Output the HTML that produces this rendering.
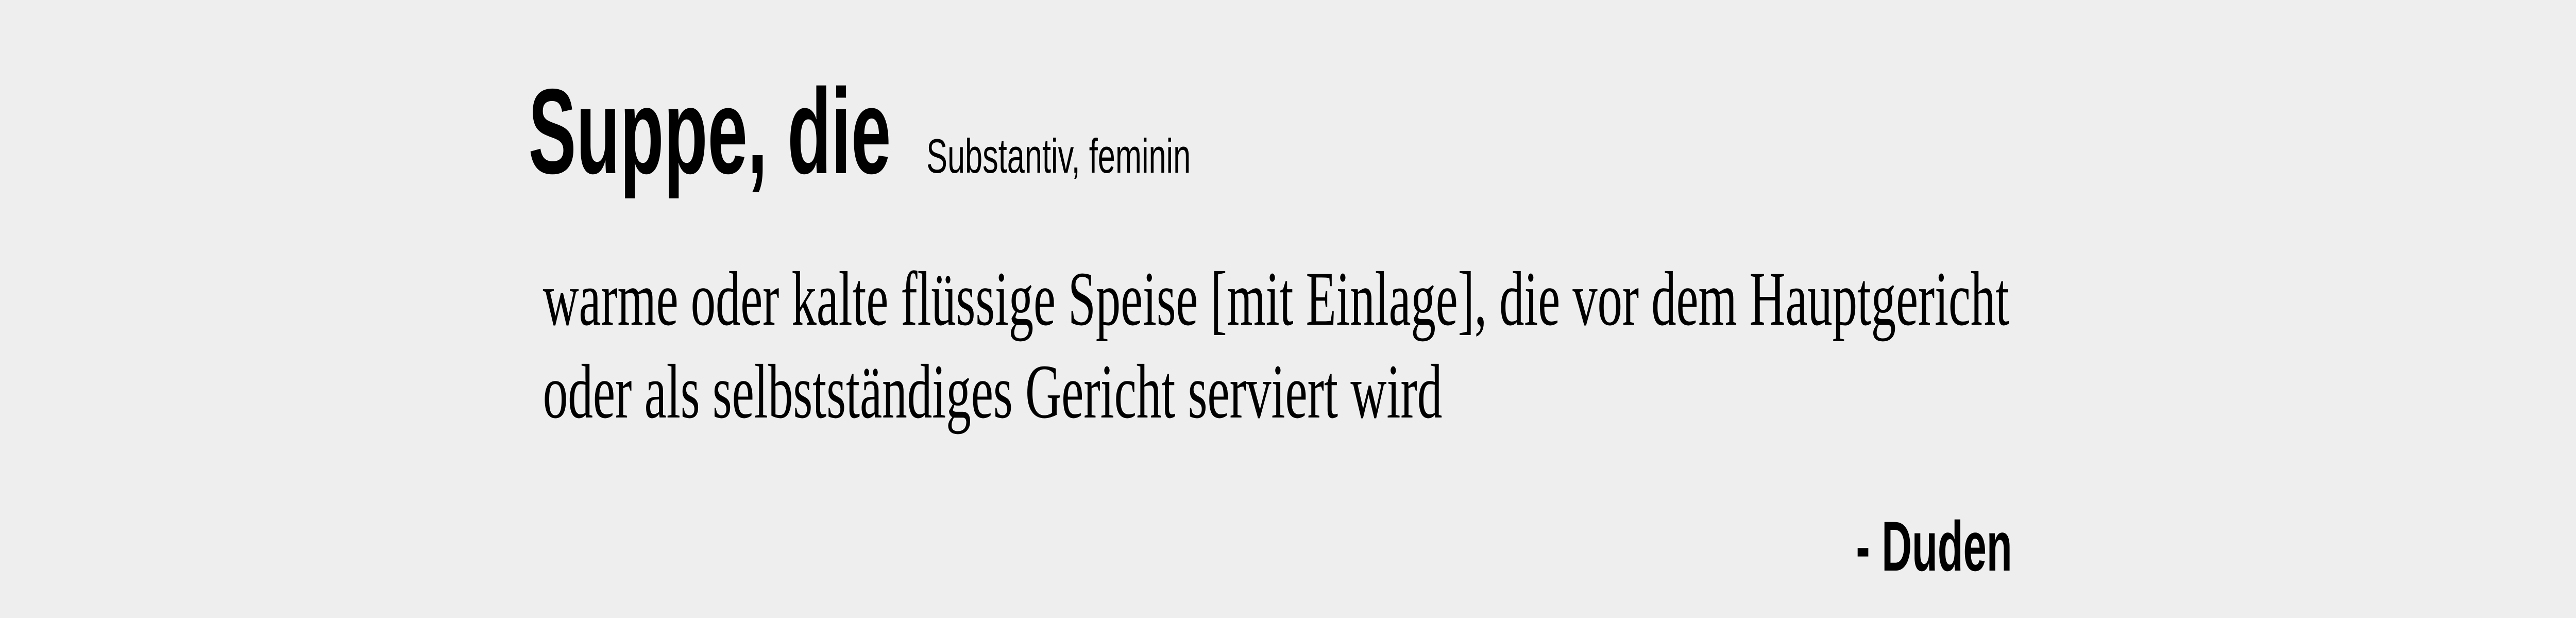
<!DOCTYPE html>
<html><head><meta charset="utf-8"><style>
html,body{margin:0;padding:0;background:#eeeeee;width:100%;height:100%;overflow:hidden;}
svg{display:block;width:100vw;height:100vh;}
</style></head><body>
<svg viewBox="0 0 8000 1199" preserveAspectRatio="none" xmlns="http://www.w3.org/2000/svg">
<rect width="8000" height="1199" fill="#eeeeee"/>
<text x="1641" y="336" font-family="Liberation Sans, Arial, sans-serif" font-weight="bold" font-size="235" fill="#000" textLength="1126" lengthAdjust="spacingAndGlyphs">Suppe, die</text>
<text x="2877" y="335" font-family="Liberation Sans, Arial, sans-serif" font-size="94" fill="#000" textLength="821" lengthAdjust="spacingAndGlyphs">Substantiv, feminin</text>
<text x="1686" y="630" font-family="Liberation Serif, serif" font-size="150" fill="#000" textLength="4554" lengthAdjust="spacingAndGlyphs">warme oder kalte flüssige Speise [mit Einlage], die vor dem Hauptgericht</text>
<text x="1686" y="810" font-family="Liberation Serif, serif" font-size="150" fill="#000" textLength="2793" lengthAdjust="spacingAndGlyphs">oder als selbstständiges Gericht serviert wird</text>
<text x="5764" y="1107" font-family="Liberation Sans, Arial, sans-serif" font-weight="bold" font-size="137" fill="#000" textLength="485" lengthAdjust="spacingAndGlyphs">- Duden</text>
</svg>
</body></html>
